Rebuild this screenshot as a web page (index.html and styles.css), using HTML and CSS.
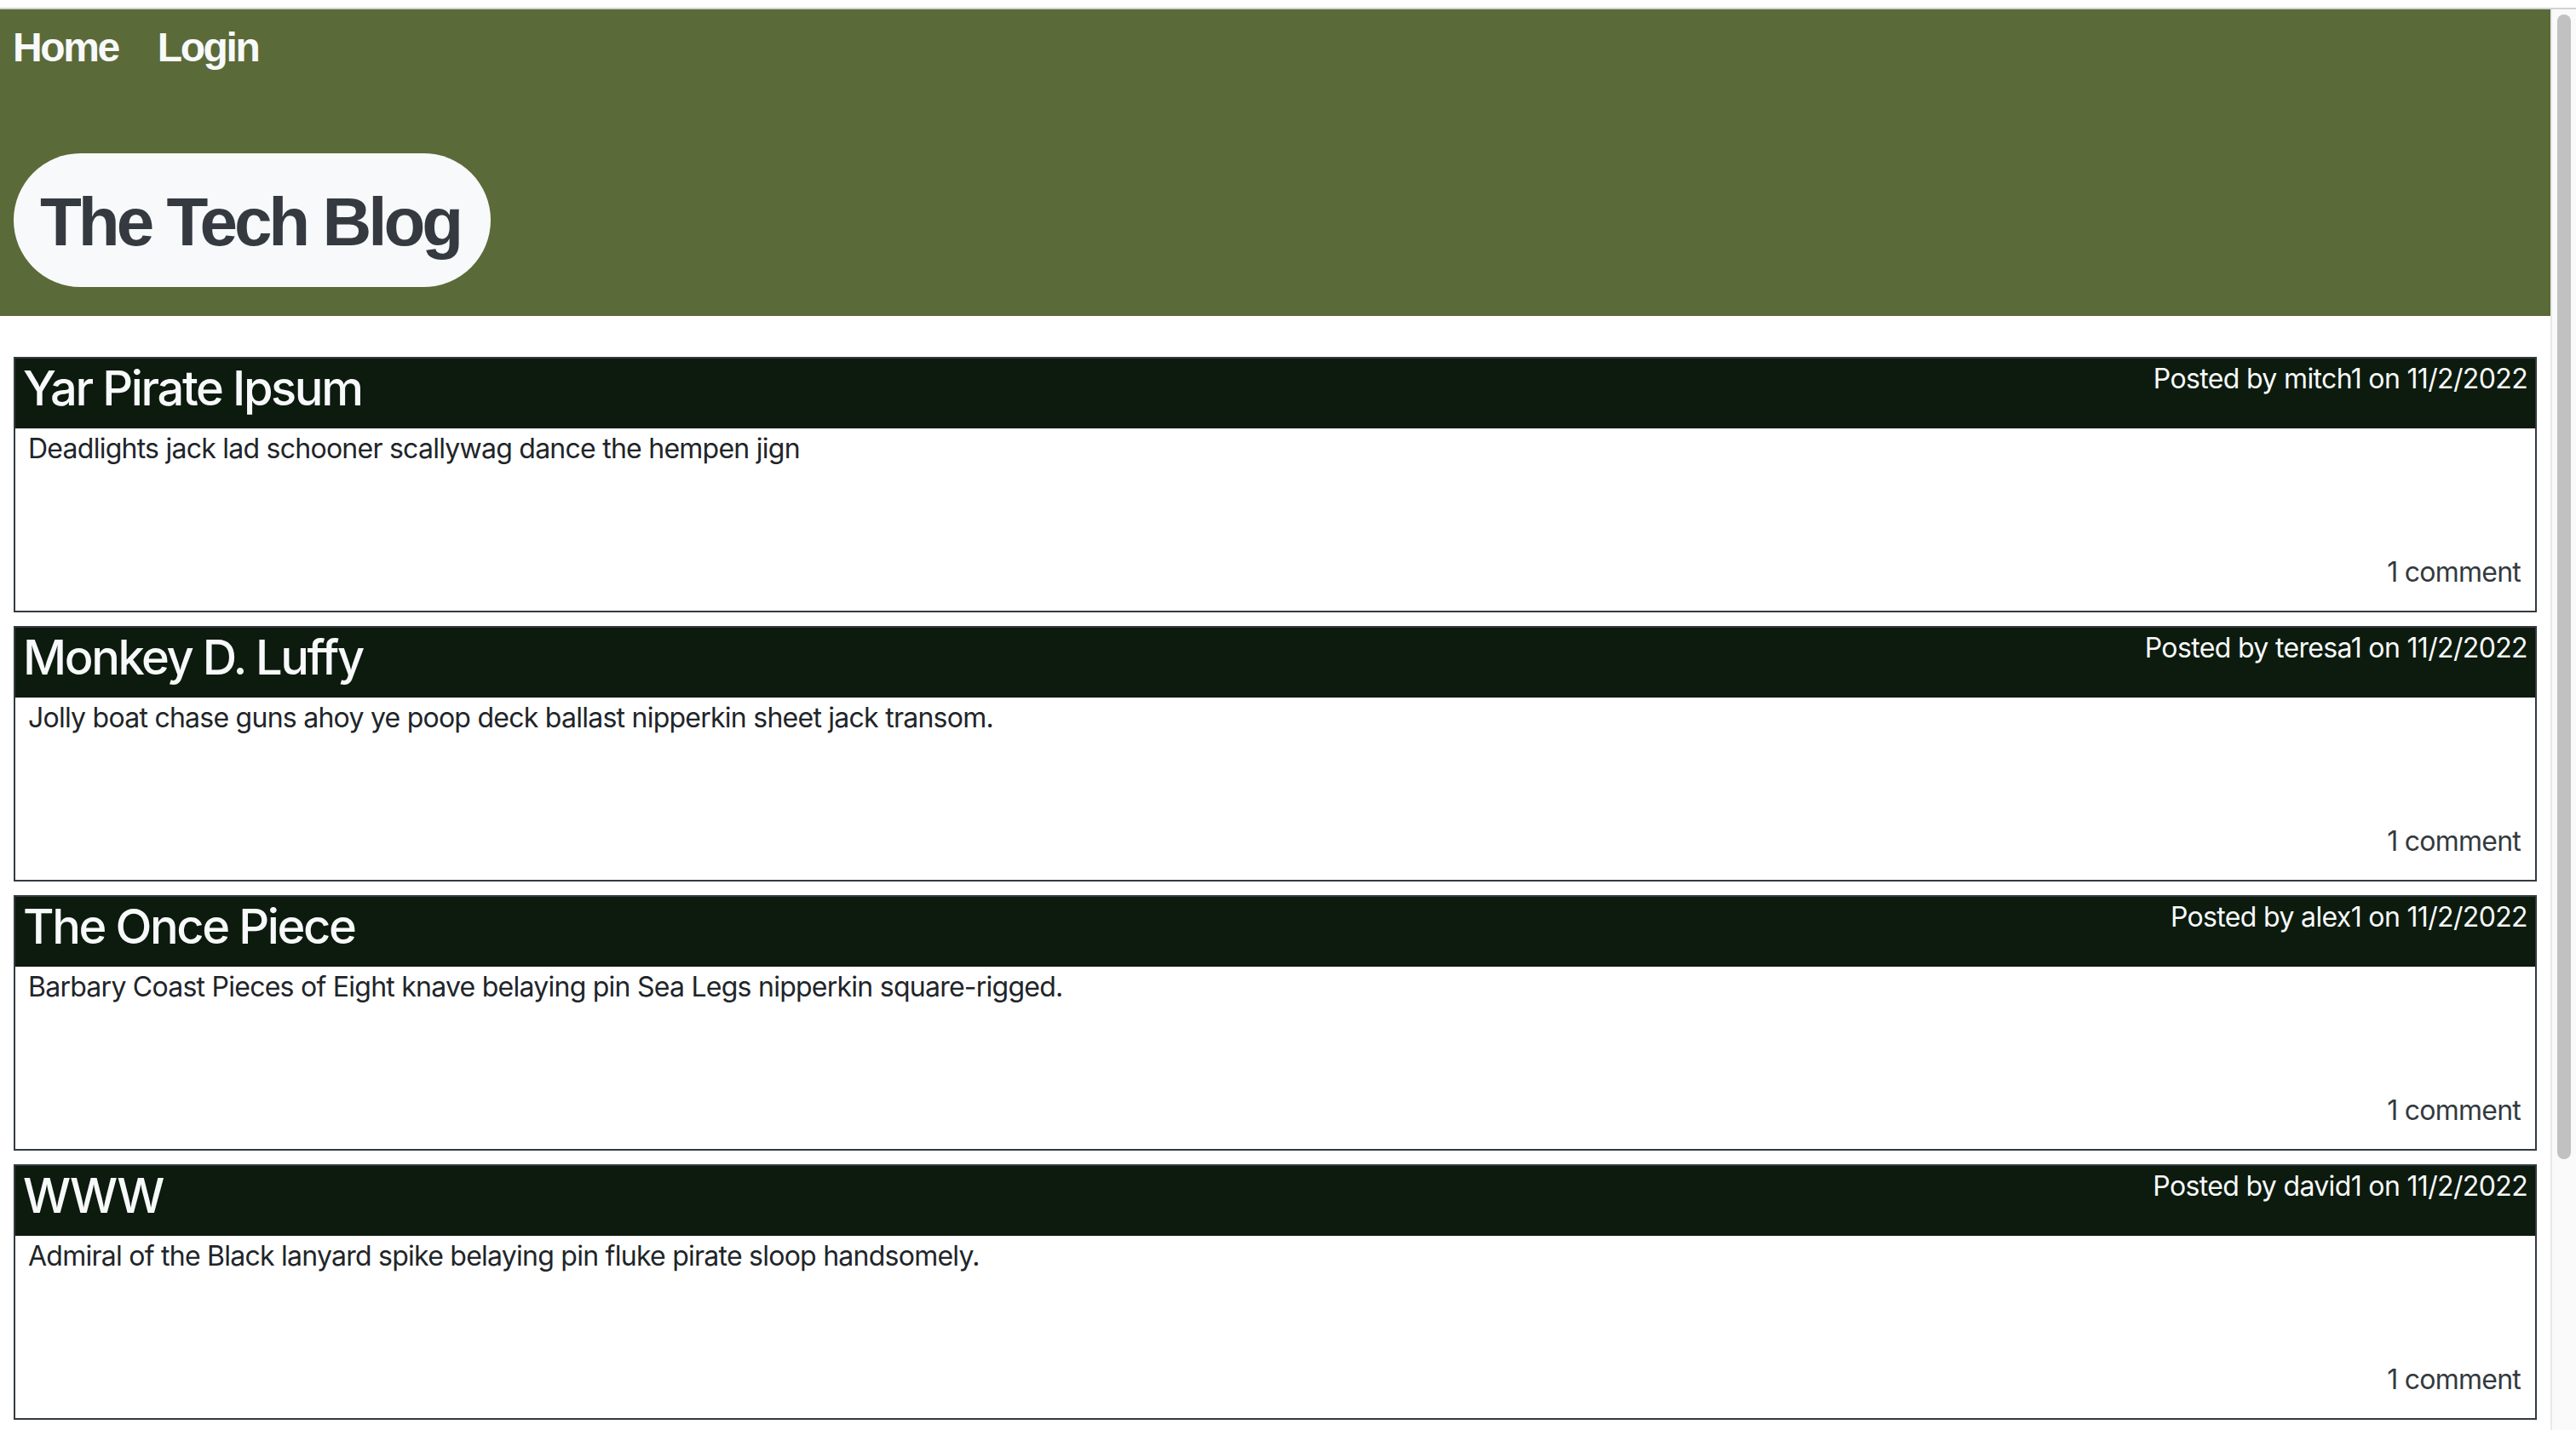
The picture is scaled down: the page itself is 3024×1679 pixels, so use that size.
FILE: index.html
```html
<!DOCTYPE html>
<html lang="en">
<head>
<meta charset="utf-8">
<title>The Tech Blog</title>
<link rel="stylesheet" href="styles.css">
</head>
<body>
<div class="chrome"></div>
<div class="window">
  <div class="page">
    <header class="site-header">
      <nav class="nav">
        <a class="nav-link" href="#">Home</a>
        <a class="nav-link" href="#">Login</a>
      </nav>
      <h1 class="brand">The Tech Blog</h1>
    </header>
    <main class="posts">
      <article class="post">
        <div class="post-head">
          <h2 class="post-title">Yar Pirate Ipsum</h2>
          <span class="post-meta">Posted by mitch1 on 11/2/2022</span>
        </div>
        <div class="post-body">
          <p class="post-text">Deadlights jack lad schooner scallywag dance the hempen jign</p>
          <span class="post-comments">1 comment</span>
        </div>
      </article>
      <article class="post">
        <div class="post-head">
          <h2 class="post-title">Monkey D. Luffy</h2>
          <span class="post-meta">Posted by teresa1 on 11/2/2022</span>
        </div>
        <div class="post-body">
          <p class="post-text">Jolly boat chase guns ahoy ye poop deck ballast nipperkin sheet jack transom.</p>
          <span class="post-comments">1 comment</span>
        </div>
      </article>
      <article class="post">
        <div class="post-head">
          <h2 class="post-title">The Once Piece</h2>
          <span class="post-meta">Posted by alex1 on 11/2/2022</span>
        </div>
        <div class="post-body">
          <p class="post-text">Barbary Coast Pieces of Eight knave belaying pin Sea Legs nipperkin square-rigged.</p>
          <span class="post-comments">1 comment</span>
        </div>
      </article>
      <article class="post">
        <div class="post-head">
          <h2 class="post-title">WWW</h2>
          <span class="post-meta">Posted by david1 on 11/2/2022</span>
        </div>
        <div class="post-body">
          <p class="post-text">Admiral of the Black lanyard spike belaying pin fluke pirate sloop handsomely.</p>
          <span class="post-comments">1 comment</span>
        </div>
      </article>
    </main>
  </div>
  <div class="scrollbar"><div class="scroll-thumb"></div></div>
</div>
</body>
</html>
```
FILE: styles.css
```css
html, body {
  margin: 0;
  padding: 0;
  height: 100%;
}

body {
  display: flex;
  flex-direction: column;
  background: #ffffff;
  font-family: "Inter", "Liberation Sans", sans-serif;
  color: #212529;
  overflow: hidden;
}

.chrome {
  flex: 0 0 auto;
  height: 9px;
  background: #ffffff;
  border-bottom: 2px solid #d2d2d2;
}

.window {
  flex: 1 1 auto;
  min-height: 0;
  display: flex;
}

.page {
  flex: 1 1 auto;
  min-width: 0;
  overflow: hidden;
}

.scrollbar {
  flex: 0 0 16px;
  background: #fafafa;
  border-left: 2px solid #e8e8e8;
  padding: 6px 6px 0 6px;
}

.scroll-thumb {
  width: 16px;
  height: 1344px;
  background: #c1c1c1;
  border-radius: 8px;
}

.site-header {
  background: #5b6a39;
  padding: 9px 0 34px 0;
  display: flex;
  flex-direction: column;
  align-items: flex-start;
}

.nav {
  display: flex;
  gap: 46px;
  padding-left: 15px;
  height: 72px;
}

.nav-link {
  font-family: "Liberation Sans", Arial, sans-serif;
  font-weight: 700;
  font-size: 48px;
  line-height: 72px;
  letter-spacing: -2.4px;
  color: #f8f9fa;
  text-decoration: none;
}

.brand {
  margin: 88px 0 0 16px;
  padding: 33px 36px 28px 31px;
  height: 96px;
  background: #f8f9fa;
  color: #343a40;
  border-radius: 80px;
  font-family: "Liberation Sans", Arial, sans-serif;
  font-weight: 700;
  font-size: 80px;
  line-height: 96px;
  letter-spacing: -4px;
}

.posts {
  display: flex;
  flex-direction: column;
  gap: 16px;
  padding: 48px 16px 16px 16px;
}

.post {
  border: 2px solid #343a40;
  height: 296px;
  display: flex;
  flex-direction: column;
  background: #ffffff;
}

.post-head {
  flex: 0 0 82px;
  box-sizing: border-box;
  background: #0c1b0e;
  color: #f8f9fa;
  display: flex;
  justify-content: space-between;
  align-items: flex-start;
  padding: 0 9px 0 9px;
}

.post-title {
  margin: 0;
  font-size: 56px;
  font-weight: 500;
  line-height: 70px;
  letter-spacing: -2.4px;
}

.post-meta {
  font-size: 32px;
  line-height: 48px;
  letter-spacing: -0.65px;
}

.post-body {
  flex: 1 1 auto;
  display: flex;
  flex-direction: column;
  justify-content: space-between;
  padding: 0 17px 21px 15px;
}

.post-text {
  margin: 0;
  font-size: 32px;
  line-height: 48px;
  letter-spacing: -0.75px;
  color: #212529;
}

.post-comments {
  align-self: flex-end;
  font-size: 32px;
  line-height: 48px;
  letter-spacing: -0.75px;
  color: #343a40;
}
```
